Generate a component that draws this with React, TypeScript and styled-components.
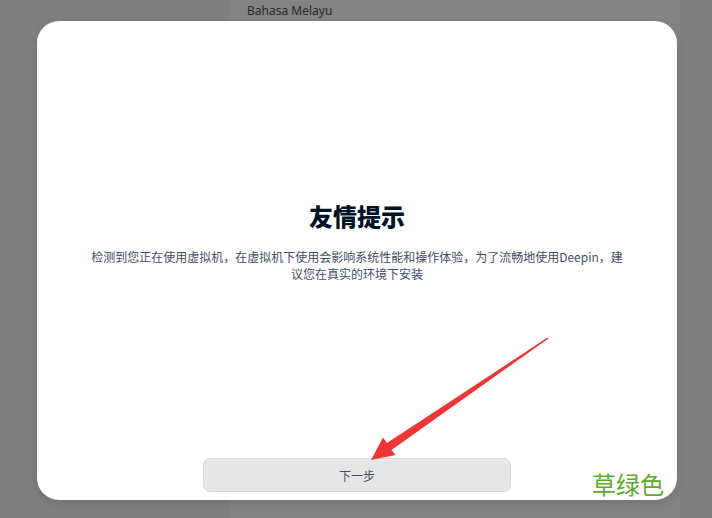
import styled, { createGlobalStyle } from 'styled-components';

const GlobalStyle = createGlobalStyle`
  html, body {
    margin: 0;
    padding: 0;
    background: #7f7f7f;
  }
  body {
    font-family: "Noto Sans", "Noto Sans CJK SC", sans-serif;
  }
`;

const Stage = styled.div`
  position: relative;
  width: 712px;
  height: 518px;
  display: grid;
  overflow: hidden;
  background: #7f7f7f;
`;

const LanguagePanel = styled.div`
  grid-area: 1 / 1;
  margin-left: 229px;
  width: 451px;
  height: 518px;
  background: #838383;
`;

const LanguageItem = styled.div`
  padding: 3px 0 0 18px;
  height: 18px;
  font-size: 12px;
  line-height: 16px;
  color: #2b2b2b;
`;

const Dialog = styled.div`
  grid-area: 1 / 1;
  align-self: start;
  justify-self: start;
  margin: 21px 0 0 37px;
  width: 640px;
  height: 479px;
  box-sizing: border-box;
  padding: 0 0 8px;
  background: #ffffff;
  border-radius: 22px;
  box-shadow: 0 3px 10px rgba(0, 0, 0, 0.12);
  display: flex;
  flex-direction: column;
  align-items: center;
  font-family: "Noto Sans CJK SC", "Noto Sans", sans-serif;
`;

const Body = styled.div`
  flex: 1;
  width: 100%;
  display: flex;
  flex-direction: column;
  align-items: center;
  justify-content: center;
  padding-top: 3px;
  box-sizing: border-box;
`;

const Title = styled.h1`
  margin: 0 0 16px;
  font-size: 24px;
  line-height: 32px;
  font-weight: 900;
  color: #001326;
`;

const Message = styled.p`
  margin: 0;
  width: 540px;
  font-size: 12px;
  line-height: 17px;
  text-align: center;
  color: #414d68;
`;

const NextButton = styled.button`
  width: 308px;
  height: 34px;
  border: 1px solid #d9d9d9;
  border-radius: 7px;
  background: #e6e6e6;
  font-family: inherit;
  font-size: 12px;
  color: #414d68;
  cursor: pointer;
`;

const ArrowLayer = styled.svg`
  position: absolute;
  left: 0;
  top: 0;
  width: 712px;
  height: 518px;
  pointer-events: none;
`;

const Watermark = styled.div`
  position: absolute;
  left: 592px;
  top: 469px;
  font-family: "Noto Sans CJK SC", sans-serif;
  font-size: 24px;
  line-height: 30px;
  color: #5cab2c;
`;

export default function App() {
  return (
    <>
      <GlobalStyle />
      <Stage>
        <LanguagePanel>
          <LanguageItem>Bahasa Melayu</LanguageItem>
        </LanguagePanel>
        <Dialog>
          <Body>
            <Title>友情提示</Title>
            <Message>
              检测到您正在使用虚拟机，在虚拟机下使用会影响系统性能和操作体验，为了流畅地使用Deepin，建议您在真实的环境下安装
            </Message>
          </Body>
          <NextButton>下一步</NextButton>
        </Dialog>
        <ArrowLayer viewBox="0 0 712 518">
          <polygon
            fill="#f03535"
            points="371,460 395.5,455 391.5,450 548.5,338.5 547.5,337.5 387,443 383,437.5"
          />
        </ArrowLayer>
        <Watermark>草绿色</Watermark>
      </Stage>
    </>
  );
}
